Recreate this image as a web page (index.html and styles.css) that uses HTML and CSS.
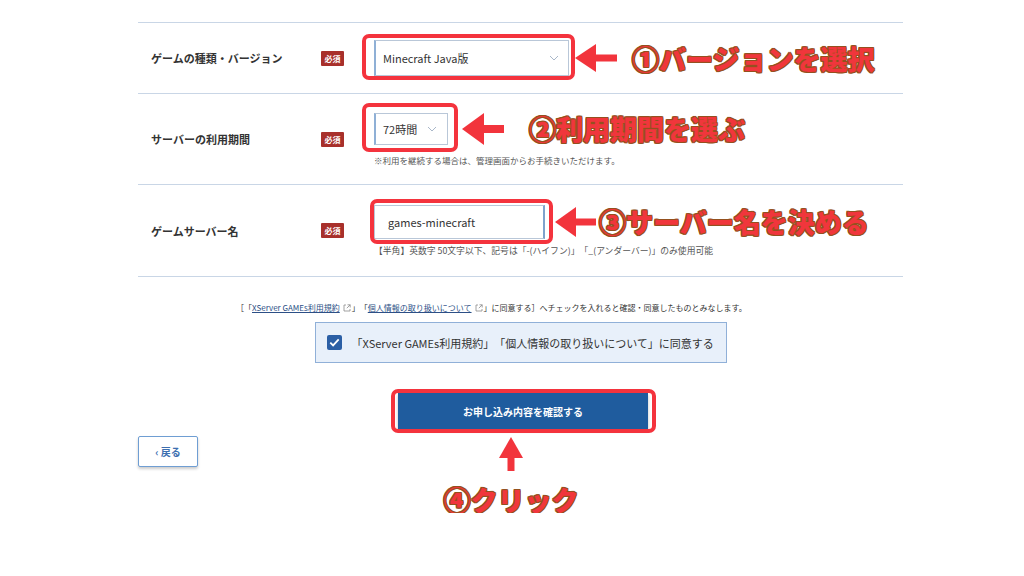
FILE: index.html
```html
<!DOCTYPE html>
<html lang="ja">
<head>
    <meta charset="UTF-8">
    <meta name="viewport" content="width=device-width, initial-scale=1.0">
    <title>お申し込み内容の入力</title>
    <link rel="stylesheet" href="styles.css">
</head>
<body>
    <div class="page">
        <!-- Form rows -->
        <div class="form">
            <div class="row row-version">
                <div class="label">ゲームの種類・バージョン</div>
                <div class="badge">必須</div>
                <div class="field">
                    <div class="field-line">
                        <div class="mark mark-version">
                            <div class="select select-version">
                                <span>Minecraft Java版</span>
                                <svg class="chevron" width="10" height="6" viewBox="0 0 10 6"><path d="M1 1l4 4 4-4" fill="none" stroke="#a9b7c9" stroke-width="1"/></svg>
                            </div>
                        </div>
                        <svg class="arrow arrow-version" width="42" height="28" viewBox="0 0 42 28"><polygon points="0,14 21,0 21,28" fill="#f2343c"/><rect x="19" y="10.5" width="23" height="7" fill="#f2343c"/></svg>
                        <span class="callout">①バージョンを選択</span>
                    </div>
                </div>
            </div>

            <div class="row row-period">
                <div class="label">サーバーの利用期間</div>
                <div class="badge">必須</div>
                <div class="field">
                    <div class="field-line">
                        <div class="mark mark-period">
                            <div class="select select-period">
                                <span>72時間</span>
                                <svg class="chevron" width="10" height="6" viewBox="0 0 10 6"><path d="M1 1l4 4 4-4" fill="none" stroke="#a9b7c9" stroke-width="1"/></svg>
                            </div>
                        </div>
                        <svg class="arrow arrow-period" width="42" height="32" viewBox="0 0 42 32"><polygon points="0,16 22,0 22,32" fill="#f2343c"/><rect x="20" y="12" width="22" height="8" fill="#f2343c"/></svg>
                        <span class="callout">②利用期間を選ぶ</span>
                    </div>
                    <p class="note note-period">※利用を継続する場合は、管理画面からお手続きいただけます。</p>
                </div>
            </div>

            <div class="row row-name">
                <div class="label">ゲームサーバー名</div>
                <div class="badge">必須</div>
                <div class="field">
                    <div class="field-line">
                        <div class="mark mark-name">
                            <div class="input">games-minecraft</div>
                        </div>
                        <svg class="arrow arrow-name" width="41" height="30" viewBox="0 0 41 30"><polygon points="0,15 21,0 21,30" fill="#f2343c"/><rect x="19" y="11.5" width="22" height="7" fill="#f2343c"/></svg>
                        <span class="callout">③サーバー名を決める</span>
                    </div>
                    <p class="note note-name">【半角】英数字 50文字以下、記号は「-(ハイフン)」「_(アンダーバー)」のみ使用可能</p>
                </div>
            </div>
        </div>

        <!-- Agreement -->
        <p class="agree-note">［「<a href="#">XServer GAMEs利用規約</a><svg class="ext" width="8" height="8" viewBox="0 0 8 8"><path d="M3 1H1v6h6V5M4.5 0.8H7.2v2.7M7.2 0.8L3.8 4.2" fill="none" stroke="#8a8a8a" stroke-width="0.8"/></svg>」「<a href="#">個人情報の取り扱いについて</a><svg class="ext" width="8" height="8" viewBox="0 0 8 8"><path d="M3 1H1v6h6V5M4.5 0.8H7.2v2.7M7.2 0.8L3.8 4.2" fill="none" stroke="#8a8a8a" stroke-width="0.8"/></svg>」に同意する］へチェックを入れると確認・同意したものとみなします。</p>

        <div class="agree-box">
            <span class="checkbox">
                <svg width="15" height="15" viewBox="0 0 15 15"><path d="M3.3 7.6l2.8 2.8 5.6-6" fill="none" stroke="#fff" stroke-width="1.8"/></svg>
            </span>
            <span class="agree-text">「XServer GAMEs利用規約」「個人情報の取り扱いについて」に同意する</span>
        </div>

        <!-- Actions -->
        <div class="actions">
            <div class="mark mark-submit">
                <button class="submit" type="button">お申し込み内容を確認する</button>
            </div>
        </div>

        <div class="bottom-row">
            <button class="back" type="button">‹ 戻る</button>
            <div class="click-hint">
                <svg width="26" height="34" viewBox="0 0 26 34"><polygon points="13,0 25,21 1,21" fill="#f2343c"/><rect x="9.5" y="19" width="7" height="15" fill="#f2343c"/></svg>
                <span class="callout callout-click">④クリック</span>
            </div>
        </div>
    </div>
</body>
</html>
```

FILE: styles.css
```css
:root {
    --line: #c9d6e6;
    --text: #333;
    --note: #555;
    --badge: #a8302b;
    --mark: #f4333d;
    --callout: #f0363c;
    --callout-edge: #94501e;
    --blue: #1f5c9e;
}

* {
    box-sizing: border-box;
    margin: 0;
    padding: 0;
}

body {
    font-family: 'Noto Sans CJK JP', 'Noto Sans', sans-serif;
    background-color: #fff;
    color: var(--text);
    text-spacing-trim: space-all;
}

.page {
    width: 765px;
    margin-left: 138px;
    padding-top: 22px;
}

/* Form rows */
.form {
    border-bottom: 1px solid var(--line);
}

.row {
    display: flex;
    align-items: center;
    border-top: 1px solid var(--line);
}

.row-version { height: 71px; }
.row-period { height: 91px; }
.row-name { height: 92px; }

.label {
    width: 183px;
    padding-left: 13px;
    font-size: 11px;
    font-weight: bold;
    color: var(--text);
}

.badge {
    width: 23px;
    height: 15px;
    margin-right: 30px;
    background-color: var(--badge);
    color: #fff;
    font-size: 8px;
    font-weight: bold;
    line-height: 15px;
    text-align: center;
    border-radius: 1px;
}

.field {
    display: flex;
    flex-direction: column;
}

.field-line {
    display: flex;
    align-items: center;
    white-space: nowrap;
}

/* Red highlight boxes */
.mark {
    position: relative;
}

.mark::after {
    content: '';
    position: absolute;
    border: 4px solid var(--mark);
    border-radius: 7px;
}

.mark-version::after { top: -6px; bottom: -4px; left: -12px; right: -6px; }
.mark-period::after { top: -10px; bottom: -7px; left: -12px; right: -10px; }
.mark-name::after { top: -6px; bottom: -5px; left: -4px; right: -8px; }
.mark-submit::after { top: -4px; bottom: -4px; left: -7px; right: -8px; }

.select {
    display: flex;
    align-items: center;
    justify-content: space-between;
    border: 1px solid #b9c7d8;
    border-left: 2px solid #8fb0d6;
    background-color: #fff;
    font-size: 11px;
    color: var(--text);
}

.select-version {
    width: 195px;
    height: 36px;
    padding: 0 9px 0 7px;
}

.select-period {
    width: 74px;
    height: 32px;
    padding: 0 10px 0 7px;
}

.input {
    display: flex;
    align-items: center;
    width: 171px;
    height: 34px;
    padding-left: 13px;
    border: 1px solid #b9c7d8;
    border-right: 2px solid #7fa2cc;
    font-size: 11px;
    color: var(--text);
}

.note {
    font-size: 8.5px;
    line-height: 12px;
    color: var(--note);
}

.note-period { margin-top: 9px; }
.note-name { margin-top: 6px; font-size: 8.8px; }

/* Annotations */
.arrow {
    flex-shrink: 0;
}

.arrow-version { margin: 0 15px 0 6px; }
.arrow-period { margin: 0 25px 0 14px; }
.arrow-name { margin: 0 3px 0 10px; }

.callout {
    font-size: 27px;
    font-weight: 900;
    line-height: 1;
    color: var(--callout);
    text-shadow:
        1px 0 var(--callout-edge), -1px 0 var(--callout-edge),
        0 1px var(--callout-edge), 0 -1px var(--callout-edge),
        1px 1px var(--callout-edge), -1px -1px var(--callout-edge),
        1px -1px var(--callout-edge), -1px 1px var(--callout-edge);
}

/* Agreement */
.agree-note {
    margin-top: 25px;
    padding-left: 98px;
    font-size: 8px;
    line-height: 12px;
    color: var(--text);
    white-space: nowrap;
}

.agree-note a {
    color: #2c4f86;
    text-decoration: underline;
}

.ext {
    margin: 0 1px 0 3px;
    vertical-align: -1px;
}

.agree-box {
    display: flex;
    align-items: center;
    width: 412px;
    height: 41px;
    margin: 8px auto 0;
    padding-left: 11px;
    background-color: #e8f0fa;
    border: 1px solid #90b0d8;
}

.checkbox {
    display: flex;
    width: 15px;
    height: 15px;
    margin-right: 10px;
    background-color: #2b5fa5;
    border-radius: 2px;
}

.agree-text {
    font-size: 11px;
    color: var(--text);
    white-space: nowrap;
}

/* Actions */
.actions {
    display: flex;
    justify-content: center;
    padding-left: 5px;
    margin-top: 30px;
}

.submit {
    display: block;
    width: 250px;
    height: 36px;
    border: none;
    background-color: var(--blue);
    color: #fff;
    font-family: inherit;
    font-size: 10px;
    font-weight: bold;
    box-shadow: 0 2px 3px rgba(0,0,0,0.25);
}

.bottom-row {
    display: flex;
    align-items: flex-start;
}

.back {
    width: 60px;
    height: 31px;
    margin-top: 7px;
    background-color: #fff;
    border: 1px solid #6f9ed3;
    border-radius: 2px;
    box-shadow: 0 2px 3px rgba(0,0,0,0.2);
    color: #3d6fb0;
    font-family: inherit;
    font-size: 10px;
    font-weight: bold;
}

.click-hint {
    display: flex;
    flex-direction: column;
    align-items: center;
    width: 136px;
    margin: 8px 0 0 245px;
}

.callout-click {
    margin-top: 15px;
}
```
